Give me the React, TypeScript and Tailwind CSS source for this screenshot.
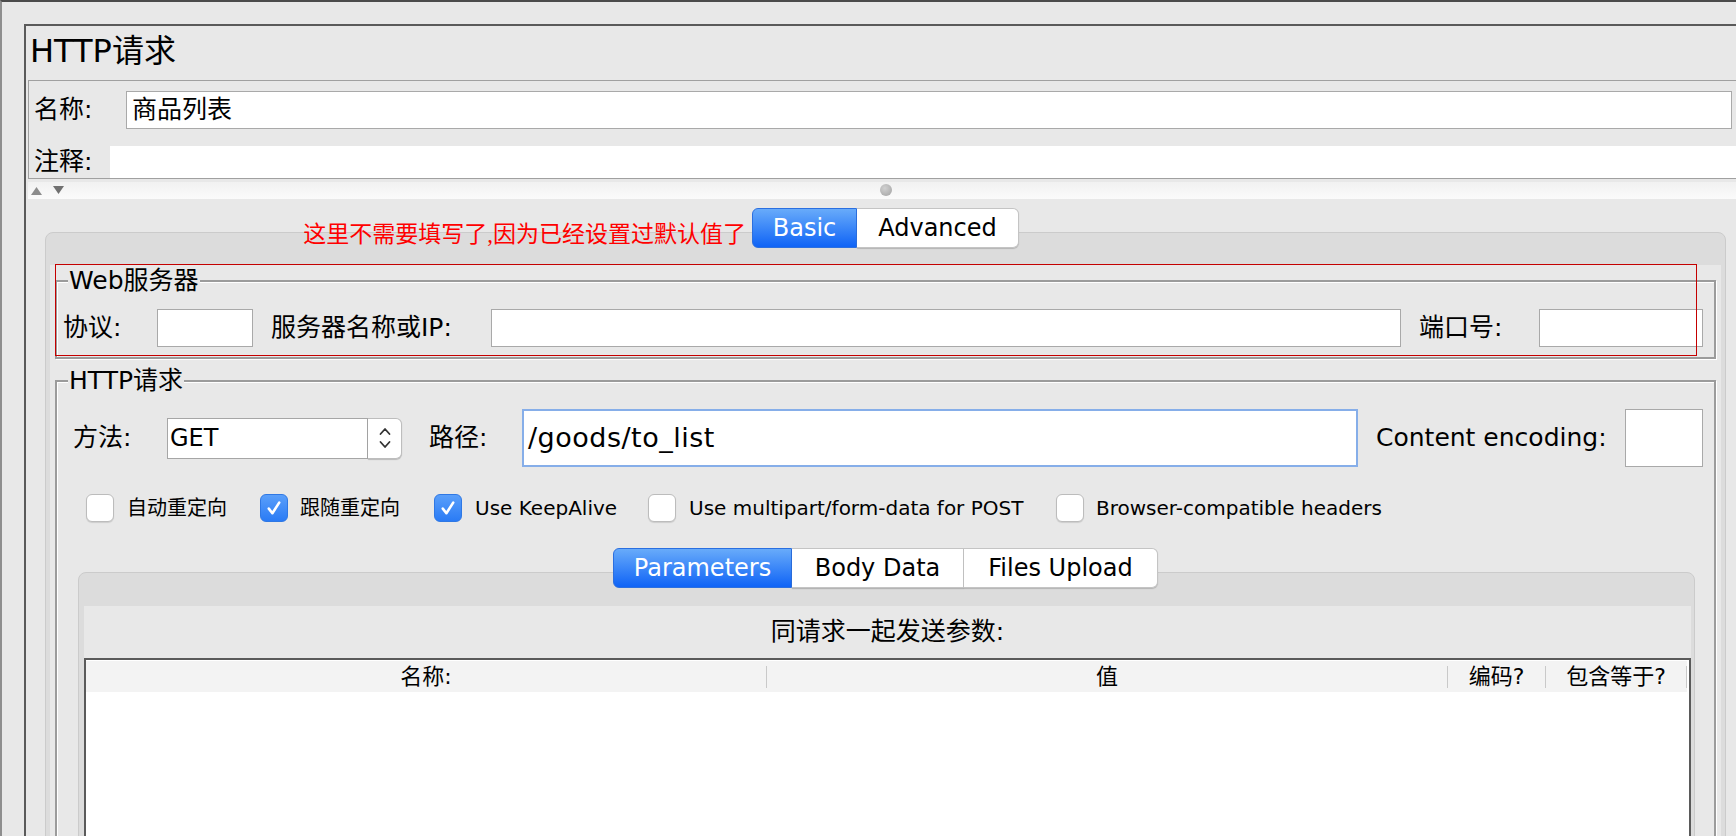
import React from 'react';

function Box({ checked }: { checked?: boolean }) {
  if (checked) {
    return (
      <span className="flex h-[28px] w-[28px] shrink-0 items-center justify-center rounded-[6px] border border-[#2f78e4] bg-[linear-gradient(#5a9ffa,#2a7bf5)]">
        <svg width="18" height="18" viewBox="0 0 18 18" fill="none">
          <path d="M3.8 9.6 L7.4 14.2 L14.2 3.6" stroke="#fff" strokeWidth="2.6" strokeLinecap="round" strokeLinejoin="round" />
        </svg>
      </span>
    );
  }
  return <span className="h-[28px] w-[28px] shrink-0 rounded-[6px] border border-[#bcbcbc] bg-white shadow-[0_1px_1px_rgba(0,0,0,0.12)]" />;
}

function Field({ className }: { className: string }) {
  return <div className={`h-[38px] border border-[#a9a9a9] bg-white ${className}`} />;
}

function Legend({ children }: { children: React.ReactNode }) {
  return (
    <div className="-mt-[15px] flex h-[28px] pl-[11px]">
      <span className="bg-[#e8e8e8] px-[1px] text-[25px] leading-[28px]">{children}</span>
    </div>
  );
}

export default function App() {
  return (
    <div className="h-[836px] w-[1736px] overflow-hidden border-t-2 border-l-2 border-t-[#4b4b4b] border-l-[#8e8e8e] bg-[#e8e8e8] pl-[22px] pt-[22px] text-black [font-family:'DejaVu_Sans','Noto_Sans_CJK_SC',sans-serif]">
      <div className="h-full border-t-2 border-l-2 border-[#5a5a5a]">
        {/* title */}
        <div className="h-[54px] pl-[4px] pt-[7px] text-[32px] leading-[37px]">HTTP请求</div>

        {/* name / comment */}
        <div className="ml-[2px] border-t border-l border-b border-[#a0a0a0]">
          <div className="flex items-center pt-[10px] pl-[5px] pr-[4px]">
            <span className="w-[92px] text-[25px] leading-[38px]">名称:</span>
            <div className="flex h-[38px] flex-1 items-center border border-[#a9a9a9] bg-white pl-[5px] text-[25px]">商品列表</div>
          </div>
          <div className="mt-[17px] flex h-[32px] items-center">
            <span className="w-[81px] pl-[5px] text-[25px] leading-[32px]">注释:</span>
            <div className="h-full flex-1 bg-white" />
          </div>
        </div>

        {/* splitter */}
        <div className="relative ml-[2px] mt-[3px] flex h-[17px] items-center bg-[linear-gradient(#f1f1f1,#fbfbfb)] pl-[3px]">
          <svg width="38" height="9" viewBox="0 0 38 9">
            <path d="M0 9 L5.5 1 L11 9 Z" fill="#8c8c8c" />
            <path d="M22 0 L33 0 L27.5 8 Z" fill="#707070" />
          </svg>
          <span className="absolute left-[852px] top-[2px] h-[12px] w-[12px] rounded-full bg-[radial-gradient(circle_at_40%_35%,#d0d0d0,#a2a2a2)]" />
        </div>

        {/* Basic / Advanced tabbed pane */}
        <div className="ml-[19px] mr-[10px] pt-[9px]">
          <div className="relative z-10 flex justify-center">
            <div className="relative flex h-[40px] text-[24px]">
              <span className="absolute bottom-0 right-full mr-[6px] whitespace-nowrap text-[23px] leading-[26px] text-[#ff0000] [font-family:'Liberation_Serif','Noto_Sans_CJK_SC',serif]">
                这里不需要填写了,因为已经设置过默认值了
              </span>
              <div className="flex w-[105px] items-center justify-center rounded-l-[6px] border border-[#2b6fe0] bg-[linear-gradient(#68abfa,#0f63f6)] text-white">Basic</div>
              <div className="flex w-[162px] items-center justify-center rounded-r-[6px] border border-l-0 border-[#c4c4c4] bg-white shadow-[0_1px_1px_rgba(0,0,0,0.18)]">Advanced</div>
            </div>
          </div>

          <div className="-mt-[16px] h-[640px] rounded-[8px] border border-[#cbcbcb] bg-[#dcdcdc] px-[4px] pt-[32px]">
            <div className="h-full bg-[#e8e8e8] pt-[15px]">
              {/* Web server */}
              <div className="relative mx-[5px]">
                <div className="pointer-events-none absolute left-0 -top-[16px] z-20 h-[92px] w-[1642px] border border-[#c40000]" />
                <div className="border-2 border-[#9b9b9b] pb-[10px] shadow-[inset_1px_1px_0_#fff,1px_1px_0_#fff]">
                  <Legend>Web服务器</Legend>
                  <div className="mt-[14px] flex h-[38px] items-center pl-[6px] pr-[11px] text-[25px]">
                    <span className="w-[94px] shrink-0">协议:</span>
                    <Field className="w-[96px] shrink-0" />
                    <span className="ml-[18px] w-[220px] shrink-0">服务器名称或IP:</span>
                    <Field className="flex-1" />
                    <span className="ml-[18px] w-[120px] shrink-0">端口号:</span>
                    <Field className="w-[164px] shrink-0" />
                  </div>
                </div>
              </div>

              {/* HTTP request */}
              <div className="mx-[5px] mt-[21px] h-[600px] border-2 border-[#9b9b9b] shadow-[inset_1px_1px_0_#fff,1px_1px_0_#fff]">
                <Legend>HTTP请求</Legend>

                <div className="mt-[14px] flex h-[58px] items-center pl-[16px] pr-[11px] text-[25px]">
                  <span className="w-[94px] shrink-0">方法:</span>
                  <div className="flex h-[41px] w-[235px] shrink-0">
                    <div className="flex flex-1 items-center border border-[#a6a6a6] bg-white pl-[2px] text-[24px]">GET</div>
                    <div className="flex w-[34px] items-center justify-center rounded-r-[6px] border border-l-0 border-[#bdbdbd] bg-white shadow-[0_1px_1px_rgba(0,0,0,0.2)]">
                      <svg width="12" height="26" viewBox="0 0 12 26" fill="none">
                        <path d="M1.5 9 L6 4 L10.5 9" stroke="#333" strokeWidth="1.8" strokeLinecap="round" strokeLinejoin="round" />
                        <path d="M1.5 17 L6 22 L10.5 17" stroke="#333" strokeWidth="1.8" strokeLinecap="round" strokeLinejoin="round" />
                      </svg>
                    </div>
                  </div>
                  <span className="ml-[27px] w-[93px] shrink-0">路径:</span>
                  <div className="flex h-[58px] flex-1 items-center border-2 border-[#86aee9] bg-white pl-[4px] text-[27px] tracking-[0.5px]">/goods/to_list</div>
                  <span className="ml-[18px] w-[249px] shrink-0">Content encoding:</span>
                  <div className="h-[58px] w-[78px] shrink-0 border border-[#a9a9a9] bg-white" />
                </div>

                <div className="mt-[27px] flex h-[28px] items-center pl-[29px] text-[20px]">
                  <div className="flex w-[174px] shrink-0 items-center gap-[13px]"><Box /><span>自动重定向</span></div>
                  <div className="flex w-[174px] shrink-0 items-center gap-[12px]"><Box checked /><span>跟随重定向</span></div>
                  <div className="flex w-[214px] shrink-0 items-center gap-[13px]"><Box checked /><span>Use KeepAlive</span></div>
                  <div className="flex w-[408px] shrink-0 items-center gap-[13px]"><Box /><span>Use multipart/form-data for POST</span></div>
                  <div className="flex items-center gap-[12px]"><Box /><span>Browser-compatible headers</span></div>
                </div>

                {/* Parameters tabs */}
                <div className="relative z-10 mt-[26px] flex justify-center">
                  <div className="flex h-[40px] text-[24px]">
                    <div className="flex w-[179px] items-center justify-center rounded-l-[6px] border border-[#2b6fe0] bg-[linear-gradient(#68abfa,#0f63f6)] text-white">Parameters</div>
                    <div className="flex w-[172px] items-center justify-center border-y border-r border-[#c4c4c4] bg-white shadow-[0_1px_1px_rgba(0,0,0,0.18)]">Body Data</div>
                    <div className="flex w-[194px] items-center justify-center rounded-r-[6px] border-y border-r border-[#c4c4c4] bg-white shadow-[0_1px_1px_rgba(0,0,0,0.18)]">Files Upload</div>
                  </div>
                </div>

                <div className="-mt-[16px] ml-[21px] mr-[19px] h-[400px] rounded-[8px] border border-[#cbcbcb] bg-[#dcdcdc] pl-[5px] pr-[3px] pt-[33px]">
                  <div className="h-full bg-[#e8e8e8]">
                    <div className="flex h-[52px] items-center justify-center text-[25px]">同请求一起发送参数:</div>
                    <div className="h-[300px] border-x-2 border-t-2 border-[#5a5a5a] bg-white pt-[1px]">
                      <div className="flex h-[31px] items-center text-[22px]">
                        <div className="flex h-full w-[680px] items-center justify-center bg-[#f3f3f3]">名称:</div>
                        <div className="flex h-full w-[1px] items-center bg-[#f3f3f3]"><span className="h-[22px] w-[1px] bg-[#c9c9c9]" /></div>
                        <div className="flex h-full w-[680px] items-center justify-center bg-[#f3f3f3]">值</div>
                        <div className="flex h-full w-[1px] items-center bg-[#f3f3f3]"><span className="h-[22px] w-[1px] bg-[#c9c9c9]" /></div>
                        <div className="flex h-full w-[97px] items-center justify-center bg-[#f3f3f3]">编码?</div>
                        <div className="flex h-full w-[1px] items-center bg-[#f3f3f3]"><span className="h-[22px] w-[1px] bg-[#c9c9c9]" /></div>
                        <div className="flex h-full w-[140px] items-center justify-center bg-[#f3f3f3]">包含等于?</div>
                        <div className="flex h-full w-[1px] items-center bg-[#f3f3f3]"><span className="h-[22px] w-[1px] bg-[#c9c9c9]" /></div>
                      </div>
                    </div>
                  </div>
                </div>
              </div>
            </div>
          </div>
        </div>
      </div>
    </div>
  );
}
